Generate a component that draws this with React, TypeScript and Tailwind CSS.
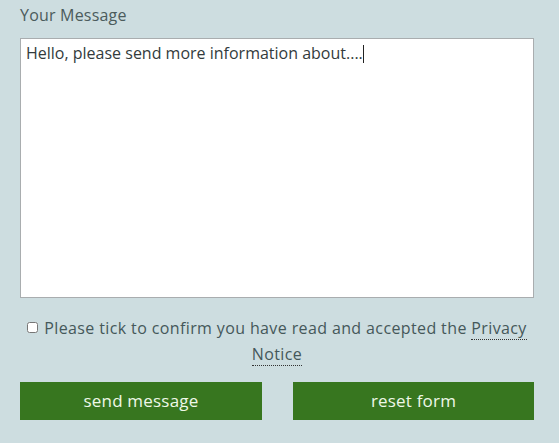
import React from "react";

export default function App() {
  return (
    <div
      className="w-[559px] h-[443px] bg-[#cddde0] px-5 overflow-hidden"
      style={{ fontFamily: "'Open Sans', 'Liberation Sans', sans-serif" }}
    >
      <div className="pt-[3px] leading-6 text-[16px] tracking-[0.2px] text-[#4b5b5c]">Your Message</div>
      <div className="mt-[11px] h-[260px] w-[514px] bg-white border border-[#a9adaf] px-[5px] pt-[2px] text-[16px] leading-6 text-[#333b3c]">
        Hello, please send more information about....
        <span className="inline-block w-px h-[18px] bg-[#222] align-[-4px]" />
      </div>
      <p className="mt-[17px] w-[514px] text-center text-[16px] tracking-[0.38px] leading-[26px] text-[#45585a]">
        <input
          type="checkbox"
          className="w-[11px] h-[11px] mr-[6px] align-[1px]"
        />
        Please tick to confirm you have read and accepted the{" "}
        <span className="border-b border-dotted border-[#333]">Privacy Notice</span>
      </p>
      <div className="mt-[15px] w-[514px] flex justify-between">
        <button className="w-[242px] h-[38px] bg-[#37761f] text-[#eef8e8] text-[17px] font-medium tracking-[0.2px]">
          send message
        </button>
        <button className="w-[241px] h-[38px] bg-[#37761f] text-[#eef8e8] text-[17px] font-medium tracking-[0.2px]">
          reset form
        </button>
      </div>
    </div>
  );
}
